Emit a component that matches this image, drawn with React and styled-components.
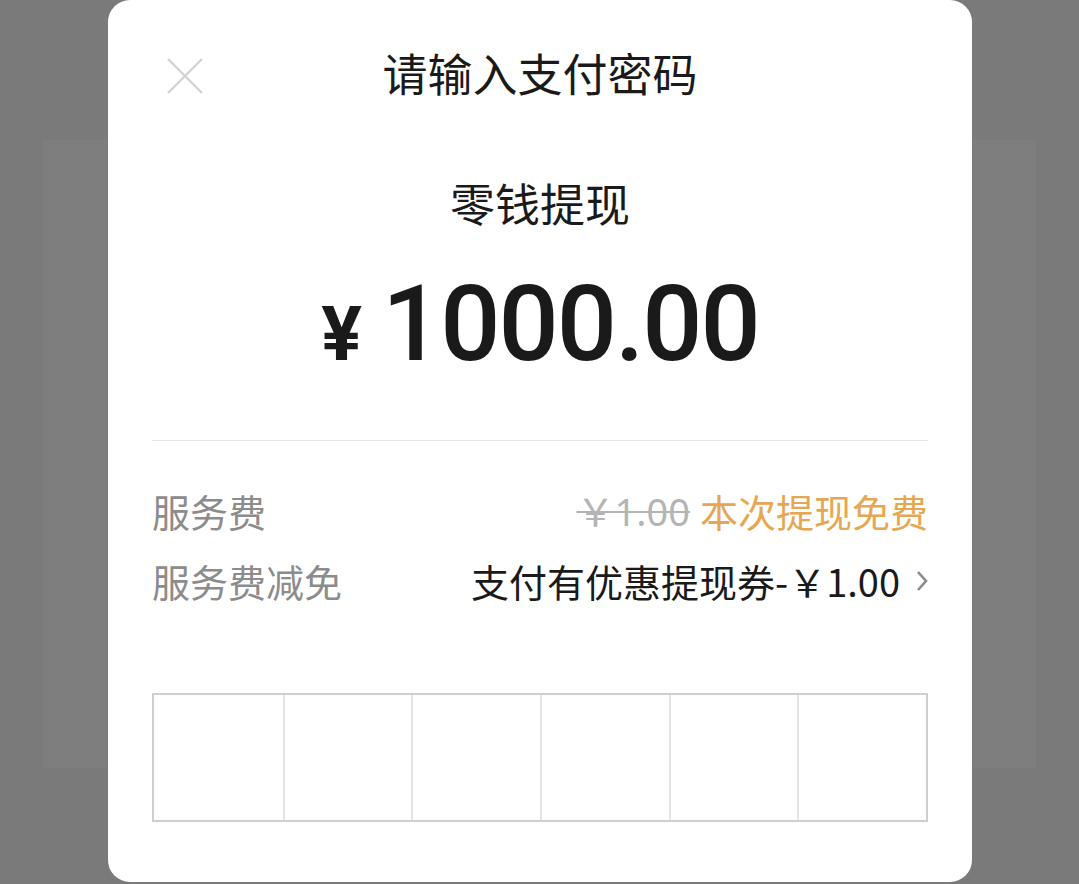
import React from 'react'
import styled, { createGlobalStyle } from 'styled-components'

const Black = "#1a1a1a";
const Gray = "#8c8c8c";
const Orange = "#e6a752";

const GlobalStyle = createGlobalStyle`
  html, body {
    margin: 0;
    padding: 0;
    background: #7b7b7b;
  }
  body {
    font-family: "Noto Sans CJK SC", "Noto Sans", sans-serif;
  }
`

const Backdrop = styled.div`
  position: relative;
  width: 1079px;
  height: 884px;
  overflow: hidden;
  background: #7a7a7a;
  padding-top: 140px;
  box-sizing: border-box;
`
const BehindPanel = styled.div`
  margin: 0 43px;
  height: 628px;
  background: #7e7e7e;
`
const Sheet = styled.div`
  position: absolute;
  left: 108px;
  top: 0;
  width: 864px;
  height: 882px;
  background: #fff;
  border-radius: 22px;
  padding: 0 44px;
  box-sizing: border-box;
  display: flex;
  flex-direction: column;
`
const Header = styled.div`
  display: grid;
  grid-template-columns: 1fr auto 1fr;
  align-items: center;
  height: 144px;
`
const Close = styled.button`
  justify-self: start;
  margin-left: 14px;
  margin-top: 8px;
  width: 38px;
  height: 38px;
  padding: 0;
  border: 0;
  background: none;
  display: flex;
`
const Title = styled.h1`
  margin: 0;
  font-size: 45px;
  font-weight: 400;
  color: ${Black};
  line-height: 1;
`
const Subject = styled.div`
  text-align: center;
  font-size: 45px;
  color: ${Black};
  line-height: 1;
  margin-top: 36px;
`
const Amount = styled.div`
  display: flex;
  justify-content: center;
  align-items: baseline;
  margin-top: 44px;
  height: 110px;
  color: ${Black};
  font-family: Roboto, "Noto Sans", sans-serif;
  line-height: 110px;
`
const Yen = styled.span`
  font-size: 76px;
  font-weight: 700;
  margin-right: 20px;
`
const Digits = styled.span`
  font-size: 106px;
  font-weight: 500;
  letter-spacing: -2px;
`
const Divider = styled.div`
  height: 1px;
  background: #e6e6e6;
  margin-top: 61px;
`
const Row = styled.div`
  display: flex;
  justify-content: space-between;
  align-items: center;
  height: 40px;
  margin-top: ${p => p.$top}px;
  font-size: 38px;
  line-height: 40px;
`
const Label = styled.span`
  color: ${Gray};
`
const Value = styled.span`
  display: flex;
  align-items: center;
  color: ${p => p.$color || Black};
`
const Struck = styled.span`
  color: #b4b4b4;
  text-decoration: line-through;
  text-decoration-thickness: 2px;
  margin-right: 10px;
  font-family: "Noto Sans", "Noto Sans CJK SC", sans-serif;
`
const Chevron = styled.svg`
  margin-left: 16px;
`
const PinBox = styled.div`
  display: grid;
  grid-template-columns: repeat(6, 1fr);
  height: 129px;
  margin-top: 92px;
  border: 2px solid #cfcfcf;
  box-sizing: border-box;
`
const Cell = styled.div`
  border-left: ${p => (p.$first ? "none" : "2px solid #e4e4e4")};
`

const App = () => {
  return (
    <>
      <GlobalStyle />
      <Backdrop>
        <BehindPanel />
        <Sheet>
          <Header>
            <Close aria-label="关闭">
              <svg width="38" height="38" viewBox="0 0 38 38">
                <path d="M2 2 L36 36 M36 2 L2 36" stroke="#d2d2d2" strokeWidth="2.4" fill="none" />
              </svg>
            </Close>
            <Title>请输入支付密码</Title>
            <span />
          </Header>
          <Subject>零钱提现</Subject>
          <Amount>
            <Yen>¥</Yen>
            <Digits>1000.00</Digits>
          </Amount>
          <Divider />
          <Row $top={50}>
            <Label>服务费</Label>
            <Value $color={Orange}>
              <Struck>￥1.00</Struck>
              本次提现免费
            </Value>
          </Row>
          <Row $top={30}>
            <Label>服务费减免</Label>
            <Value>
              支付有优惠提现券-￥1.00
              <Chevron width="12" height="22" viewBox="0 0 12 22">
                <path d="M2 2 L10 11 L2 20" stroke="#8a8a8a" strokeWidth="2.6" fill="none" />
              </Chevron>
            </Value>
          </Row>
          <PinBox>
            {[0, 1, 2, 3, 4, 5].map(i => (
              <Cell key={i} $first={i === 0} />
            ))}
          </PinBox>
        </Sheet>
      </Backdrop>
    </>
  )
}

export default App
